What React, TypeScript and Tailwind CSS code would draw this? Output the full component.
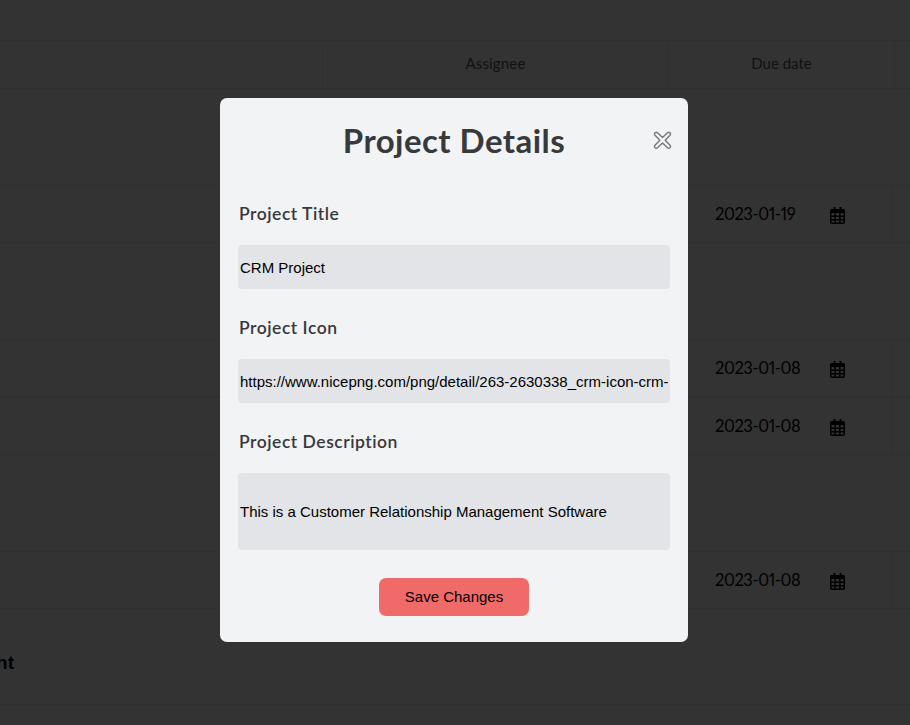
import React from "react";

function CalendarIcon() {
  return (
    <svg width="15" height="17" viewBox="0 0 15 17" fill="none">
      <path d="M4.500 0v3M10.500 0v3" stroke="#000" strokeWidth="1.800" />
      <path d="M1.500 2h12A1.500 1.500 0 0 1 15 3.500V6H0V3.500A1.500 1.500 0 0 1 1.500 2Z" fill="#000" />
      <rect x="0.750" y="4" width="13.500" height="12.200" rx="1.200" stroke="#000" strokeWidth="1.500" />
      <path d="M5.100 5v11M9.900 5v11M1 9.300h13M1 12.700h13" stroke="#000" strokeWidth="1.500" />
    </svg>
  );
}

function TaskRow({ date }: { date: string }) {
  return (
    <div className="flex h-[58px] shrink-0 border-y border-[#2f2f2f]">
      <div className="w-[668px]" />
      <div className="flex w-[225px] items-center border-r border-[#303030] pl-[47px] text-[16.500px] tracking-[-0.400px] text-black">
        <span className="w-[115px] proportional-nums">{date}</span>
        <span className="pt-[3px]">
          <CalendarIcon />
        </span>
      </div>
    </div>
  );
}

function Field({ label, value, tall = false }: { label: string; value: string; tall?: boolean }) {
  return (
    <label className="flex flex-col">
      <span className="h-[45px] pt-[2px] pl-px text-[17.500px] leading-[24px] font-semibold tracking-[0.520px] text-[#38393b]">
        {label}
      </span>
      <input
        defaultValue={value}
        className={`${tall ? "h-[77px]" : "mb-[25px] h-[44px]"} w-full rounded-[4px] bg-[#e3e4e7] px-[2px] font-['Liberation_Sans',Arial,sans-serif] text-[15px] text-black outline-none`}
      />
    </label>
  );
}

export default function App() {
  return (
    <div className="relative h-[725px] w-[910px] overflow-hidden bg-[#333333] font-['Lato',sans-serif]">
      <div className="flex h-full flex-col">
        <div className="h-[40px] shrink-0" />
        <div className="flex h-[49px] shrink-0 border-y border-[#2f2f2f] text-[15px] text-[#111]">
          <div className="w-[323px] border-r border-[#303030]" />
          <div className="flex w-[346px] items-center justify-center border-r border-[#303030] pb-[2px] tracking-[0.150px]">
            Assignee
          </div>
          <div className="flex w-[226px] items-center justify-center border-r border-[#303030] pb-[2px]">Due date</div>
        </div>
        <div className="h-[96px] shrink-0" />
        <TaskRow date="2023-01-19" />
        <div className="h-[96px] shrink-0" />
        <TaskRow date="2023-01-08" />
        <TaskRow date="2023-01-08" />
        <div className="h-[96px] shrink-0" />
        <TaskRow date="2023-01-08" />
        <div className="flex h-[95px] shrink-0 items-center pt-[13px]">
          <div className="flex w-[14px] justify-end whitespace-nowrap font-['Liberation_Sans',Arial,sans-serif] text-[19px] font-bold text-black">
            nt
          </div>
        </div>
        <div className="h-[20px] shrink-0 border-t border-[#2f2f2f]" />
      </div>

      <div className="absolute top-[98px] left-[220px] h-[544px] w-[468px] rounded-[7px] bg-[#f1f3f5] px-[18px] pt-[22px]">
        <h1 className="text-center text-[33px] leading-[41px] font-bold tracking-[0.450px] text-[#38393b]">
          Project Details
        </h1>
        <button className="absolute top-[33px] left-[433px]" aria-label="Close">
          <svg width="19" height="19" viewBox="0 0 19 19" fill="none" stroke="#77787a" strokeWidth="1.400" strokeLinejoin="round">
            <path d="M2 1.700Q3.300 .6 4.500 1.700L9.500 6.500L14.500 1.700Q15.700 .6 17 1.700Q18 3 17 4.200L12.200 9.200L17 14.200Q18 15.500 17 16.700Q15.700 17.800 14.500 16.700L9.500 11.900L4.500 16.700Q3.300 17.800 2 16.700Q1 15.500 2 14.200L6.800 9.200L2 4.200Q1 3 2 1.700Z" />
          </svg>
        </button>
        <div className="pt-[39px]">
          <Field label="Project Title" value="CRM Project" />
          <Field label="Project Icon" value="https://www.nicepng.com/png/detail/263-2630338_crm-icon-crm-" />
          <Field label="Project Description" value="This is a Customer Relationship Management Software" tall />
        </div>
        <button className="mx-auto mt-[28px] block h-[38px] w-[150px] rounded-[7px] bg-[#f06a6a] font-['Liberation_Sans',Arial,sans-serif] text-[15px] text-black">
          Save Changes
        </button>
      </div>
    </div>
  );
}
